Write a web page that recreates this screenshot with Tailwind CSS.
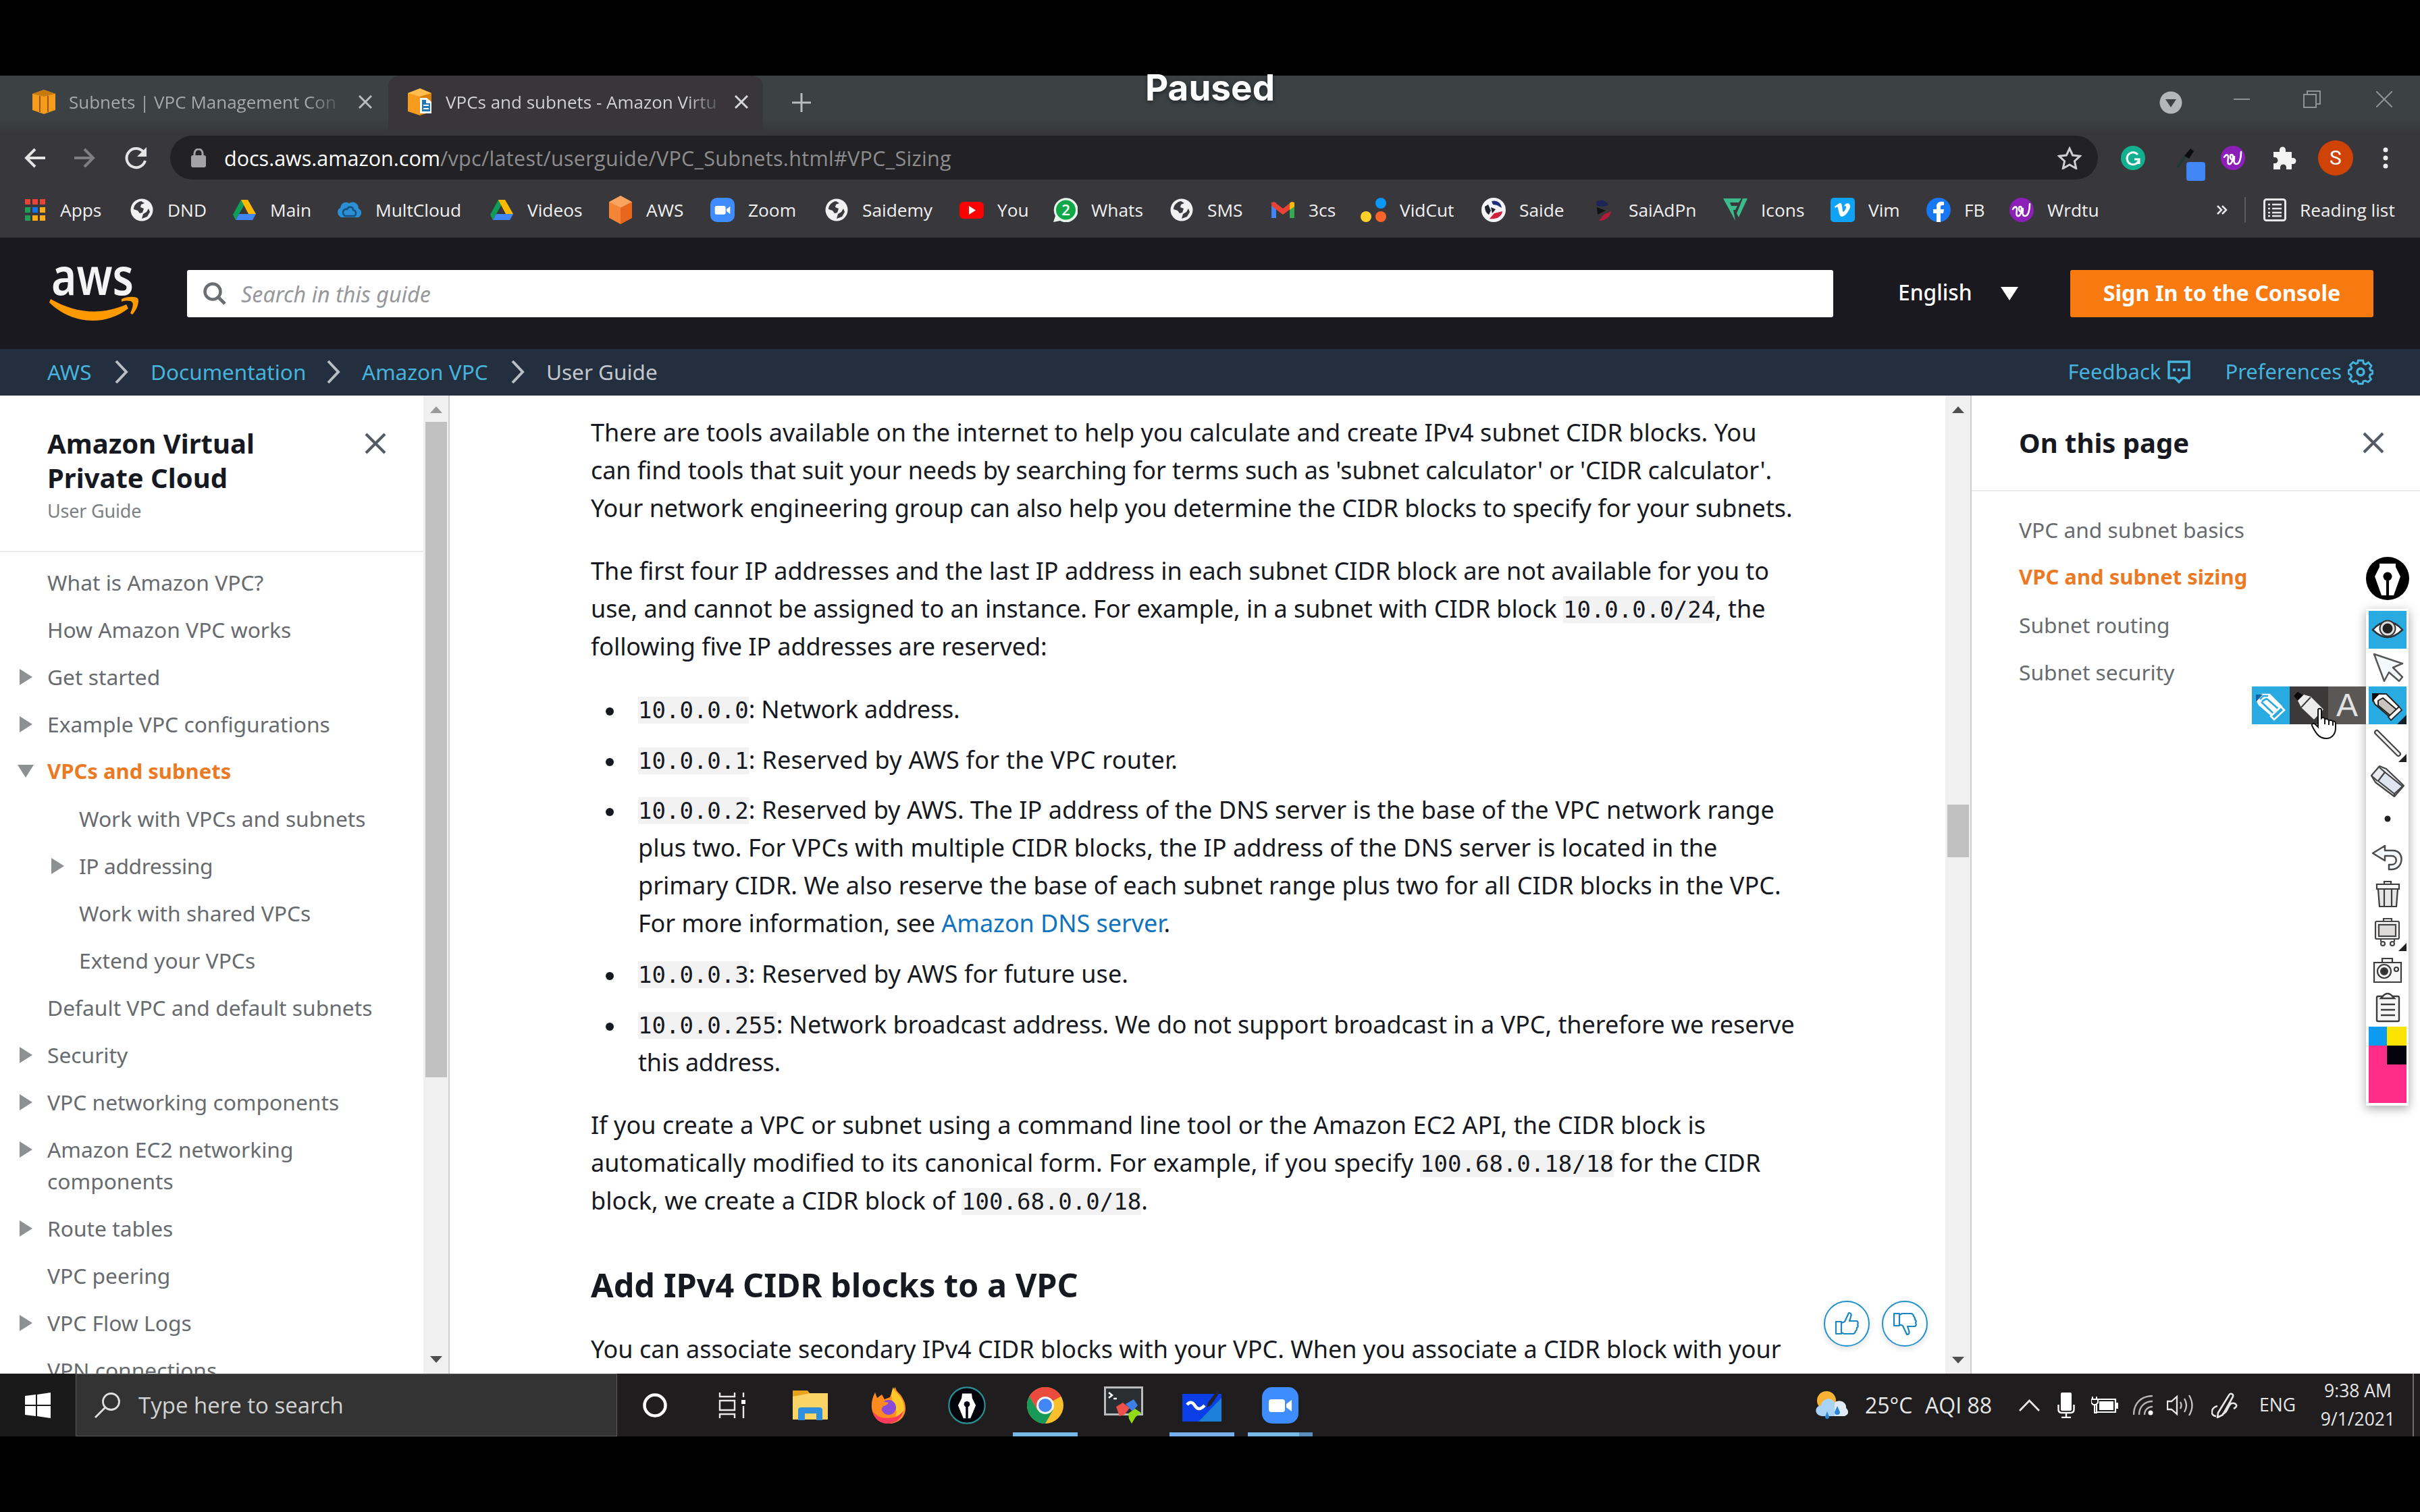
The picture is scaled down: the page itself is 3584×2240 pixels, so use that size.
<!DOCTYPE html>
<html lang="en">
<head>
<meta charset="utf-8">
<title>VPCs and subnets - Amazon Virtual Private Cloud</title>
<script src="https://cdn.jsdelivr.net/npm/@tailwindcss/browser@4"></script>
</head>
<body class="w-[3584px] h-[2240px] overflow-hidden bg-black font-['Noto_Sans',sans-serif] text-[#16191f]">

<!-- shared symbols -->
<svg class="hidden">
  <defs>
    <symbol id="globe" viewBox="0 0 36 36"><circle cx="18" cy="18" r="16.5" fill="#f1f1f1"/><path d="M17 5c-6 1-11 6-11 12l6 2 3 4 4-1 2-6-5-2 1-4 5-2zM20 24l5-3 3-5 2 5-4 7-8 3z" fill="#3a393d"/></symbol>
    <symbol id="drive" viewBox="0 0 36 36"><path d="M13 3h9L10 24l-5 9-4-8z" fill="#0f9d58"/><path d="M13 3h10l12 21H24z" fill="#ffba00"/><path d="M10 24h25l-5 9H5z" fill="#4285f4"/></symbol>
    <symbol id="wordtune" viewBox="0 0 36 36"><circle cx="18" cy="18" r="18" fill="#8b1fb8"/><path d="M5 17c2-4 6-5 6 0 0 4-2 9 1 10 4 1 6-6 6-11 0-4-4-4-4 0 0 5 3 5 6 3M20 16c-1 6-1 11 3 11 5 0 7-9 7-18" fill="none" stroke="#fff" stroke-width="2.600" stroke-linecap="round"/></symbol>
    <symbol id="zoomcam" viewBox="0 0 54 54"><rect width="54" height="54" rx="15" fill="#3f8cff"/><rect x="10" y="18" width="24" height="19" rx="4" fill="#fff"/><path d="M36 25l8-6v17l-8-6z" fill="#fff"/></symbol>
    <symbol id="tri" viewBox="0 0 20 24"><path d="M1 0L20 12 1 24z" fill="#8d9191"/></symbol>
    <symbol id="chev" viewBox="0 0 22 36"><path d="M3 2l15 16L3 34" fill="none" stroke="#b9bec4" stroke-width="4"/></symbol>
    <symbol id="close" viewBox="0 0 32 32"><path d="M2 2l28 28M30 2L2 30" stroke="#545b64" stroke-width="4.2"/></symbol>
    <symbol id="nib" viewBox="0 0 64 64"><path d="M20 10h24v5l7 14-10 28H34V34h-4v23h-7L13 29l7-14z" fill="#fff"/><circle cx="32" cy="29" r="6.5" fill="#000"/><path d="M32 30v27" stroke="#000" stroke-width="3"/></symbol>
  </defs>
</svg>

<div class="relative w-[3584px] h-[2240px] flex flex-col pt-[112px]">

<!-- browser chrome -->
<header class="h-[240px] shrink-0 bg-[#38373b] font-['Open_Sans',sans-serif] text-[26px] leading-none">
  <div class="h-[82px] bg-linear-to-b from-[#3c4144] from-75% to-[#39393d] flex">
    <div class="w-[575px] pl-[46px] flex items-center text-[#a9abad] pb-[4px]">
      <svg class="w-[38px] h-[38px]" viewBox="0 0 38 38"><path d="M2 7L19 1l17 6v24l-17 6-17-6z" fill="#f79b1e"/><path d="M2 7l17 4 17-4-17-6z" fill="#c77a10"/><path d="M13 10v24M25 10v24" stroke="#9a5b07" stroke-width="2"/></svg>
      <div class="ml-[18px] w-[403px] overflow-hidden whitespace-nowrap leading-[40px] text-transparent bg-clip-text bg-linear-to-r from-[#a9abad] from-88% to-[#4a4d50]">Subnets | VPC Management Con</div>
      <svg class="ml-[26px] w-[20px] h-[20px]" viewBox="0 0 20 20"><path d="M1 1l18 18M19 1L1 19" stroke="#b9bbbd" stroke-width="3"/></svg>
    </div>
    <div class="w-[555px] pl-[26px] flex items-center rounded-t-[16px] bg-[#38363b] pb-[4px]">
      <svg class="w-[42px] h-[42px]" viewBox="0 0 42 42"><path d="M3 8L21 1l17 7v27l-17 6-18-6z" fill="#f79b1e"/><path d="M3 8l18 5 17-5-17-7z" fill="#ffbe4d"/><path d="M21 13v28l17-6V8z" fill="#d98107"/><path d="M21 15h10l7 6v17H21z" fill="#fff"/><path d="M24 18h6v5h6v12H24z" fill="#2277b8"/><path d="M26 26h8M26 31h8" stroke="#fff" stroke-width="2"/></svg>
      <div class="ml-[17px] w-[406px] overflow-hidden whitespace-nowrap leading-[40px] text-transparent bg-clip-text bg-linear-to-r from-[#d4d5d6] from-88% to-[#4a4d50]">VPCs and subnets - Amazon Virtu</div>
      <svg class="ml-[22px] w-[20px] h-[20px]" viewBox="0 0 20 20"><path d="M1 1l18 18M19 1L1 19" stroke="#d6d7d8" stroke-width="3"/></svg>
    </div>
    <div class="flex-1 flex items-center pl-[43px] pr-[41px] pb-[2px]">
      <svg class="w-[28px] h-[28px]" viewBox="0 0 28 28"><path d="M14 0v28M0 14h28" stroke="#b9bbbd" stroke-width="3"/></svg>
      <div class="flex-1"></div>
      <svg class="w-[34px] h-[34px] mr-[76px]" viewBox="0 0 34 34"><circle cx="17" cy="17" r="16.5" fill="#b4b7ba"/><path d="M9 12h16l-8 12z" fill="#3c4144"/></svg>
      <svg class="w-[24px] h-[24px] mb-[10px] mr-[79px]" viewBox="0 0 24 24"><path d="M0 12h24" stroke="#909396" stroke-width="2"/></svg>
      <svg class="w-[26px] h-[26px] mb-[10px] mr-[82px]" viewBox="0 0 26 26"><path d="M1 6h18v19H1zM6 5V1h19v19h-5" fill="none" stroke="#909396" stroke-width="2"/></svg>
      <svg class="w-[24px] h-[24px] mb-[10px]" viewBox="0 0 24 24"><path d="M0 0l24 24M24 0L0 24" stroke="#909396" stroke-width="2"/></svg>
    </div>
  </div>

  <div class="h-[79px] flex items-center pl-[36px] pr-[45px]">
    <svg class="w-[31px] h-[30px]" viewBox="0 0 31 30"><path d="M31 15H4M16 2L3 15l13 13" fill="none" stroke="#e4e4e5" stroke-width="4"/></svg>
    <svg class="w-[31px] h-[30px] ml-[43px]" viewBox="0 0 31 30"><path d="M0 15h27M15 2l13 13-13 13" fill="none" stroke="#7f7f82" stroke-width="4"/></svg>
    <svg class="w-[36px] h-[34px] ml-[43px]" viewBox="0 0 36 34"><path d="M29 9a14 14 0 1 0 2 12" fill="none" stroke="#e4e4e5" stroke-width="4"/><path d="M33 1v14H19z" fill="#e4e4e5"/></svg>
    <div class="ml-[32px] w-[2855px] h-[65px] rounded-full bg-[#222224] flex items-center pl-[31px] pr-[24px] text-[30.5px]">
      <svg class="w-[22px] h-[28px]" viewBox="0 0 22 28"><rect y="10" width="22" height="18" rx="3" fill="#a3a3a6"/><path d="M5 12V7a6 6 0 0 1 12 0v5" fill="none" stroke="#a3a3a6" stroke-width="3"/></svg>
      <div class="ml-[27px] flex-1 whitespace-nowrap text-[#8d8d90] leading-[44px] tracking-[0.32px]"><span class="text-white tracking-normal">docs.aws.amazon.com</span>/vpc/latest/userguide/VPC_Subnets.html#VPC_Sizing</div>
      <svg class="w-[36px] h-[34px]" viewBox="0 0 36 34"><path d="M18 3l4.6 10 11 1.200-8.200 7.500 2.300 10.800L18 27l-9.700 5.500 2.300-10.800L2.400 14.200l11-1.200z" fill="none" stroke="#cfcfd1" stroke-width="3"/></svg>
    </div>
    <svg class="w-[36px] h-[38px] ml-[34px]" viewBox="0 0 36 38"><circle cx="18" cy="19" r="18" fill="#13b08f"/><path d="M25 14a9 9 0 1 0 2 7h-7M27 21v7" fill="none" stroke="#fff" stroke-width="3"/></svg>
    <svg class="w-[46px] h-[56px] ml-[44px] mt-[16px]" viewBox="0 0 46 56"><path d="M4 34l12-18" stroke="#1f3a36" stroke-width="4"/><path d="M14 17l9-11 5 4-7 11z" fill="#0c0c0e"/><rect x="17" y="26" width="28" height="28" rx="4" fill="#4285f4"/></svg>
    <svg class="w-[36px] h-[36px] ml-[22px]"><use href="#wordtune"/></svg>
    <svg class="w-[36px] h-[36px] ml-[40px]" viewBox="0 0 36 36"><path d="M2 9h9V6a4.500 4.500 0 0 1 9 0v3h9v9h2a4.500 4.500 0 0 1 0 9h-2v8h-8v-3a4.500 4.500 0 0 0-9 0v3H2v-9h2a4.500 4.500 0 0 0 0-9H2z" fill="#f3f3f4"/></svg>
    <div class="ml-[32px] w-[52px] h-[52px] rounded-full bg-[#cf4307] text-white text-[30px] font-['Roboto',sans-serif] flex items-center justify-center">S</div>
    <svg class="w-[8px] h-[32px] ml-[44px]" viewBox="0 0 8 32"><path d="M4 4h0M4 16h0M4 28h0" stroke="#eee" stroke-width="7" stroke-linecap="round"/></svg>
  </div>

  <nav class="h-[76px] flex items-center pl-[33px] text-[26.300px] text-[#f1f1f1] whitespace-nowrap">
    <div class="w-[159px] shrink-0 flex items-center gap-[20px]"><svg class="w-[36px] h-[36px]" viewBox="0 0 36 36"><path d="M4 2h8v8H4zM15 2h8v8h-8zM26 2h8v8h-8z" fill="#ea4335"/><path d="M4 14h8v8H4zM4 26h8v8H4z" fill="#1e9e57"/><path d="M15 14h8v8h-8z" fill="#1a73e8"/><path d="M26 14h8v8h-8zM15 26h8v8h-8zM26 26h8v8h-8z" fill="#fbab14"/></svg>Apps</div>
    <div class="w-[152px] shrink-0 flex items-center gap-[20px]"><svg class="w-[36px] h-[36px]"><use href="#globe"/></svg>DND</div>
    <div class="w-[156px] shrink-0 flex items-center gap-[20px]"><svg class="w-[36px] h-[36px]"><use href="#drive"/></svg>Main</div>
    <div class="w-[225px] shrink-0 flex items-center gap-[20px]"><svg class="w-[36px] h-[36px]" viewBox="0 0 36 36"><path d="M5 29C-2 25-1 17 4 15 5 7 12 5 17 8c7-4 14 0 14 8 6 3 5 10 0 13z" fill="#2b8fd3"/><path d="M11 27c-6-5-2-11 3-10 2-5 9-4 9 1 5 1 5 7 2 9z" fill="none" stroke="#174f80" stroke-width="2.5"/></svg>MultCloud</div>
    <div class="w-[176px] shrink-0 flex items-center gap-[20px]"><svg class="w-[36px] h-[36px]"><use href="#drive"/></svg>Videos</div>
    <div class="w-[151px] shrink-0 flex items-center gap-[20px]"><svg class="w-[36px] h-[42px]" viewBox="0 0 36 36" preserveAspectRatio="none"><path d="M18 0l17 8v20l-17 8-17-8V8z" fill="#f58536"/><path d="M18 15l17-7v20l-17 8z" fill="#e8661b"/><path d="M18 0l17 8-17 7-17-7z" fill="#f9a461"/></svg>AWS</div>
    <div class="w-[169px] shrink-0 flex items-center gap-[20px]"><svg class="w-[36px] h-[36px]"><use href="#zoomcam"/></svg>Zoom</div>
    <div class="w-[200px] shrink-0 flex items-center gap-[20px]"><svg class="w-[36px] h-[36px]"><use href="#globe"/></svg>Saidemy</div>
    <div class="w-[139px] shrink-0 flex items-center gap-[20px]"><svg class="w-[36px] h-[36px]" viewBox="0 0 36 36"><rect y="6" width="36" height="25" rx="6" fill="#f00"/><path d="M14 12l10 6.500-10 6.500z" fill="#fff"/></svg>You</div>
    <div class="w-[172px] shrink-0 flex items-center gap-[20px]"><svg class="w-[36px] h-[36px]" viewBox="0 0 36 36"><path d="M0 36l3-9A18 18 0 1 1 10 34z" fill="#e8f5ea"/><circle cx="18.500" cy="18" r="14.500" fill="#12a84a"/><text x="18.500" y="26" text-anchor="middle" font-size="22" font-weight="600" fill="#fff">2</text></svg>Whats</div>
    <div class="w-[150px] shrink-0 flex items-center gap-[20px]"><svg class="w-[36px] h-[36px]"><use href="#globe"/></svg>SMS</div>
    <div class="w-[135px] shrink-0 flex items-center gap-[20px]"><svg class="w-[36px] h-[36px]" viewBox="0 0 36 36"><path d="M1 7h7v23H1z" fill="#4285f4"/><path d="M28 7h7v23h-7z" fill="#34a853"/><path d="M1 7l4-1 13 10L31 6l4 1v5L18 25 1 12z" fill="#ea4335"/><path d="M28 8l3-2 4 1v6l-7 5z" fill="#fbbc04"/></svg>3cs</div>
    <div class="w-[177px] shrink-0 flex items-center gap-[20px]"><svg class="w-[38px] h-[36px] -ml-[2px]" viewBox="0 0 38 36"><circle cx="30" cy="8" r="8" fill="#0a97f7"/><circle cx="8" cy="28" r="8" fill="#fdd12c"/><circle cx="30" cy="28" r="8" fill="#f9642a"/></svg>VidCut</div>
    <div class="w-[162px] shrink-0 flex items-center gap-[20px]"><svg class="w-[36px] h-[36px]" viewBox="0 0 36 36"><circle cx="18" cy="18" r="18" fill="#f4f4f6"/><path d="M15 5c6-2 14 1 15 10l-7-4-6-1z" fill="#1d2f7c"/><path d="M5 13l5-3 4 9-3 6c-4-2-6-7-6-12zM14 14l7 3-5 6z" fill="#20222c"/><path d="M12 31l7-8 12-3c0 6-8 13-19 11z" fill="#d21f3c"/></svg>Saide</div>
    <div class="w-[196px] shrink-0 flex items-center gap-[20px]"><svg class="w-[36px] h-[36px]" viewBox="0 0 36 36"><path d="M8 6c6-4 15-3 18 5l-8 2-9-1z" fill="#1d2456"/><path d="M9 14l13 5-12 6z" fill="#111"/><path d="M12 34l7-9 11-5c0 6-8 15-18 14z" fill="#b51c38"/></svg>SaiAdPn</div>
    <div class="w-[159px] shrink-0 flex items-center gap-[20px]"><svg class="w-[36px] h-[36px]" viewBox="0 0 36 36"><path d="M0 1h27l-4 6H10l2 5h9l-3 6h-3l3 16z" fill="#3cbb8c"/><path d="M29 1h7L23 29l-3-6z" fill="#3cbb8c"/></svg>Icons</div>
    <div class="w-[142px] shrink-0 flex items-center gap-[20px]"><svg class="w-[36px] h-[36px]" viewBox="0 0 36 36"><rect width="36" height="36" rx="5" fill="#10a3f5"/><path d="M6 13l7-5c4-1 4 4 5 12 1 3 5-3 5-6s-2-2-3-1c1-6 10-7 9 1-1 5-8 14-12 14s-5-8-6-13c-1-3-2-1-4 0z" fill="#fff"/></svg>Vim</div>
    <div class="w-[123px] shrink-0 flex items-center gap-[20px]"><svg class="w-[36px] h-[36px]" viewBox="0 0 36 36"><circle cx="18" cy="18" r="18" fill="#1877f2"/><path d="M15 36V23h-5v-6h5v-4c0-6 4-8 11-7v5c-4 0-5 0-5 3v3h5l-1 6h-4v13z" fill="#fff"/></svg>FB</div>
    <div class="w-[307px] shrink-0 flex items-center gap-[20px]"><svg class="w-[36px] h-[36px]"><use href="#wordtune"/></svg>Wrdtu</div>
    <svg class="w-[16px] h-[14px]" viewBox="0 0 16 14"><path d="M1 1l6 6-6 6M8 1l6 6-6 6" fill="none" stroke="#e8e8e8" stroke-width="2.600"/></svg>
    <div class="ml-[25px] w-[2px] h-[38px] bg-[#5c5b60]"></div>
    <svg class="ml-[26px] w-[34px] h-[34px]" viewBox="0 0 34 34"><rect x="1.500" y="1.500" width="31" height="31" rx="3" fill="none" stroke="#e8e8e8" stroke-width="3"/><path d="M7 9h3M7 15h3M7 21h3M7 26h3M13 9h14M13 15h14M13 21h14M13 26h14" stroke="#e8e8e8" stroke-width="2.600"/></svg>
    <div class="ml-[20px]">Reading list</div>
  </nav>
</header>

<!-- AWS header -->
<div class="h-[165px] shrink-0 bg-[#19191f] flex items-center pl-[72px]">
  <svg class="w-[136px] h-[88px]" viewBox="0 0 136 88"><text x="4" y="46" font-family="Noto Sans" font-weight="600" font-size="76" textLength="122" lengthAdjust="spacingAndGlyphs" fill="#f4f4f6">aws</text><path d="M3 52c38 22 76 24 112 8l3 6C82 94 32 88 1 57z" fill="#f90"/><path d="M108 52c9-4 20-4 24-1 3 4-1 17-8 24l-3-2c3-7 5-13 3-16s-10-3-16-1z" fill="#f90"/></svg>
  <div class="ml-[69px] w-[2438px] h-[70px] bg-white rounded-[3px] flex items-center pl-[24px]">
    <svg class="w-[34px] h-[34px]" viewBox="0 0 34 34"><circle cx="14" cy="14" r="11.500" fill="none" stroke="#6b6e72" stroke-width="4.500"/><path d="M22 22l10 10" stroke="#6b6e72" stroke-width="5"/></svg>
    <span class="ml-[22px] text-[32.300px] italic text-[#96989b] leading-[44px]">Search in this guide</span>
  </div>
  <span class="ml-[96px] w-[152px] text-[31.700px] font-medium text-white mb-[3px]">English</span>
  <svg class="w-[26px] h-[20px]" viewBox="0 0 26 20"><path d="M0 0h26L13 20z" fill="#fff"/></svg>
  <div class="ml-[77px] w-[449px] h-[70px] pb-[3px] rounded-[3px] bg-[#f97a10] text-white text-[32.300px] font-bold flex items-center justify-center whitespace-nowrap">Sign In to the Console</div>
</div>

<!-- breadcrumb -->
<div class="h-[69px] shrink-0 bg-[#232f3e] flex items-center pb-[2px] pl-[70px] pr-[69px] text-[31.500px] text-[#46b3dc] whitespace-nowrap">
  <span class="w-[99px]">AWS</span><svg class="w-[22px] h-[36px]"><use href="#chev"/></svg>
  <span class="ml-[32px] w-[260px]">Documentation</span><svg class="w-[22px] h-[36px]"><use href="#chev"/></svg>
  <span class="ml-[31px] w-[220px]">Amazon VPC</span><svg class="w-[22px] h-[36px]"><use href="#chev"/></svg>
  <span class="ml-[31px] text-[#c3c7cc]">User Guide</span>
  <span class="flex-1"></span>
  <span class="text-[31px]">Feedback</span>
  <svg class="ml-[10px] mr-[51px] w-[34px] h-[34px]" viewBox="0 0 34 34"><path d="M2 2h30v24h-9l-6 6-6-6H2z" fill="none" stroke="#46b3dc" stroke-width="3.500"/><path d="M8 14h4M15 14h4M22 14h4" stroke="#46b3dc" stroke-width="4"/></svg>
  <span class="text-[31px]">Preferences</span>
  <svg class="ml-[9px] w-[38px] h-[38px]" viewBox="0 0 38 38"><path d="M15.500 2h7l1 4.500 3 1.300L30.500 5 35 10l-2.500 4 1.200 2.500 3.300 1v4l-3.800 1.500-1 3L34.500 30 30 34l-4-2-3 1-1 3.500h-6l-1.500-3.500-3-1L7.500 34 3 29.500 5.500 26l-1-3L1 21.500v-5l3.800-1.500 1-2.500L3.500 9 8 4.500l4 2.300 2.500-1z" fill="none" stroke="#46b3dc" stroke-width="3"/><circle cx="19" cy="19" r="5" fill="none" stroke="#46b3dc" stroke-width="3.500"/></svg>
</div>

<!-- content -->
<div class="h-[1449px] shrink-0 bg-white flex overflow-hidden">
  <!-- left nav -->
  <aside class="w-[627px] shrink-0 text-[#676b6f] text-[31.750px] leading-[47px] whitespace-nowrap">
    <div class="h-[232px] border-b-2 border-[#e9ebed] pl-[70px] pt-[45px] flex">
      <div class="w-[470px]">
        <div class="text-[40px] leading-[51px] font-bold text-[#16191f]">Amazon Virtual<br>Private Cloud</div>
        <div class="text-[27px] tracking-[-0.200px] leading-[48px] text-[#7c7f83]">User Guide</div>
      </div>
      <svg class="mt-[10px] w-[32px] h-[32px]"><use href="#close"/></svg>
    </div>
    <div class="pt-[21px] flex flex-col gap-[23px]">
      <div class="pl-[70px]">What is Amazon VPC?</div>
      <div class="pl-[70px]">How Amazon VPC works</div>
      <div class="flex items-center pl-[28px]"><svg class="w-[20px] h-[24px] mr-[22px]"><use href="#tri"/></svg>Get started</div>
      <div class="flex items-center pl-[28px]"><svg class="w-[20px] h-[24px] mr-[22px]"><use href="#tri"/></svg>Example VPC configurations</div>
      <div class="flex items-center pl-[26px] text-[#ec7a24] text-[31px] font-bold"><svg class="w-[24px] h-[19px] mr-[20px]" viewBox="0 0 24 19"><path d="M0 0h24L12 19z" fill="#8d9191"/></svg>VPCs and subnets</div>
      <div class="pl-[117px]">Work with VPCs and subnets</div>
      <div class="flex items-center pl-[75px]"><svg class="w-[20px] h-[24px] mr-[22px]"><use href="#tri"/></svg><span class="tracking-[-0.400px]">IP addressing</span></div>
      <div class="pl-[117px]">Work with shared VPCs</div>
      <div class="pl-[117px]">Extend your VPCs</div>
      <div class="pl-[70px]">Default VPC and default subnets</div>
      <div class="flex items-center pl-[28px]"><svg class="w-[20px] h-[24px] mr-[22px]"><use href="#tri"/></svg>Security</div>
      <div class="flex items-center pl-[28px]"><svg class="w-[20px] h-[24px] mr-[22px]"><use href="#tri"/></svg>VPC networking components</div>
      <div class="flex items-start pl-[28px]"><svg class="w-[20px] h-[24px] mr-[22px] mt-[12px]"><use href="#tri"/></svg><span>Amazon EC2 networking<br>components</span></div>
      <div class="flex items-center pl-[28px]"><svg class="w-[20px] h-[24px] mr-[22px]"><use href="#tri"/></svg>Route tables</div>
      <div class="pl-[70px]">VPC peering</div>
      <div class="flex items-center pl-[28px]"><svg class="w-[20px] h-[24px] mr-[22px]"><use href="#tri"/></svg>VPC Flow Logs</div>
      <div class="pl-[70px]">VPN connections</div>
    </div>
  </aside>
  <div class="w-[39px] shrink-0 bg-[#f0f0f1] border-r-2 border-[#cfcfd0] flex flex-col items-center pt-[16px]">
    <svg class="w-[18px] h-[10px]" viewBox="0 0 18 10"><path d="M0 10L9 0l9 10z" fill="#9a9a9a"/></svg>
    <div class="mt-[13px] w-[32px] h-[971px] bg-[#c1c1c1]"></div>
    <svg class="mt-[413px] w-[18px] h-[10px]" viewBox="0 0 18 10"><path d="M0 0h18L9 10z" fill="#4f4f4f"/></svg>
  </div>

  <!-- article -->
  <main class="relative w-[2215px] shrink-0 pl-[209px] pt-[27px] text-[36px] leading-[56px] whitespace-nowrap">
    <p><span class="tracking-[0.055px]">There are tools available on the internet to help you calculate and create IPv4 subnet CIDR blocks. You</span><br><span class="tracking-[-0.095px]">can find tools that suit your needs by searching for terms such as 'subnet calculator' or 'CIDR calculator'.</span><br><span class="tracking-[-0.040px]">Your network engineering group can also help you determine the CIDR blocks to specify for your subnets.</span></p>
    <p class="mt-[37px]"><span class="tracking-[-0.040px]">The first four IP addresses and the last IP address in each subnet CIDR block are not available for you to</span><br><span class="tracking-[-0.080px]">use, and cannot be assigned to an instance. For example, in a subnet with CIDR block </span><code class="font-['DejaVu_Sans_Mono',monospace] text-[34px] leading-none bg-[#f2f2f3]">10.0.0.0/24</code>, the<br><span class="tracking-[-0.100px]">following five IP addresses are reserved:</span></p>
    <ul class="mt-[37px] flex flex-col gap-[18.700px]">
      <li class="flex pl-[22px]"><span class="mt-[25px] mr-[36px] w-[12px] h-[12px] rounded-full bg-[#16191f]"></span><span><code class="font-['DejaVu_Sans_Mono',monospace] text-[34px] leading-none bg-[#f2f2f3]">10.0.0.0</code><span class="tracking-[-0.200px]">: Network address.</span></span></li>
      <li class="flex pl-[22px]"><span class="mt-[25px] mr-[36px] w-[12px] h-[12px] rounded-full bg-[#16191f]"></span><span><code class="font-['DejaVu_Sans_Mono',monospace] text-[34px] leading-none bg-[#f2f2f3]">10.0.0.1</code><span class="tracking-[0.240px]">: Reserved by AWS for the VPC router.</span></span></li>
      <li class="flex pl-[22px]"><span class="mt-[25px] mr-[36px] w-[12px] h-[12px] rounded-full bg-[#16191f]"></span><span><code class="font-['DejaVu_Sans_Mono',monospace] text-[34px] leading-none bg-[#f2f2f3]">10.0.0.2</code><span class="tracking-[0.060px]">: Reserved by AWS. The IP address of the DNS server is the base of the VPC network range<br>plus two. For VPCs with multiple CIDR blocks, the IP address of the DNS server is located in the</span><br>primary CIDR. We also reserve the base of each subnet range plus two for all CIDR blocks in the VPC.<br><span class="tracking-[-0.060px]">For more information, see <a class="text-[#0f73bd]">Amazon DNS server</a>.</span></span></li>
      <li class="flex pl-[22px]"><span class="mt-[25px] mr-[36px] w-[12px] h-[12px] rounded-full bg-[#16191f]"></span><span><code class="font-['DejaVu_Sans_Mono',monospace] text-[34px] leading-none bg-[#f2f2f3]">10.0.0.3</code><span class="tracking-[0.100px]">: Reserved by AWS for future use.</span></span></li>
      <li class="flex pl-[22px]"><span class="mt-[25px] mr-[36px] w-[12px] h-[12px] rounded-full bg-[#16191f]"></span><span><code class="font-['DejaVu_Sans_Mono',monospace] text-[34px] leading-none bg-[#f2f2f3]">10.0.0.255</code><span class="tracking-[-0.050px]">: Network broadcast address. We do not support broadcast in a VPC, therefore we reserve</span><br><span class="tracking-[-0.250px]">this address.</span></span></li>
    </ul>
    <p class="mt-[37px]"><span class="tracking-[0.050px]">If you create a VPC or subnet using a command line tool or the Amazon EC2 API, the CIDR block is</span><br><span class="tracking-[0.130px]">automatically modified to its canonical form. For example, if you specify </span><code class="font-['DejaVu_Sans_Mono',monospace] text-[34px] leading-none bg-[#f2f2f3]">100.68.0.18/18</code><span class="tracking-[0.120px]"> for the CIDR</span><br><span class="tracking-[0.080px]">block, we create a CIDR block of </span><code class="font-['DejaVu_Sans_Mono',monospace] text-[34px] leading-none bg-[#f2f2f3]">100.68.0.0/18</code>.</p>
    <h2 class="mt-[66px] text-[48.600px] leading-[60px] font-bold">Add IPv4 CIDR blocks to a VPC</h2>
    <p class="mt-[38px]">You can associate secondary IPv4 CIDR blocks with your VPC. When you associate a CIDR block with your</p>

    <div class="absolute left-[2035px] top-[1341px] flex gap-[18px]">
      <div class="w-[68px] h-[68px] rounded-full border-2 border-[#2292cc] bg-white shadow-[0_3px_10px_rgba(0,0,0,0.12)] flex items-center justify-center"><svg class="w-[36px] h-[36px]" viewBox="0 0 36 36"><path d="M2 15h8v18H2zM10 17l5-2 6-13c4 0 4 3 3 6l-2 6h11c2 1 2 4 1 5 1 2 1 4-1 5 0 2 0 4-2 5 0 2-1 3-3 4H14l-4-2" fill="none" stroke="#1a86c2" stroke-width="2.200" stroke-linejoin="round"/></svg></div>
      <div class="w-[68px] h-[68px] rounded-full border-2 border-[#2292cc] bg-white shadow-[0_3px_10px_rgba(0,0,0,0.12)] flex items-center justify-center"><svg class="w-[36px] h-[36px]" viewBox="0 0 36 36"><path d="M2 3h8v18H2zM10 19l5 2 6 13c4 0 4-3 3-6l-2-6h11c2-1 2-4 1-5 1-2 1-4-1-5 0-2 0-4-2-5 0-2-1-3-3-4H14l-4 2" fill="none" stroke="#1a86c2" stroke-width="2.200" stroke-linejoin="round"/></svg></div>
    </div>
  </main>
  <div class="w-[39px] shrink-0 bg-[#f0f0f1] border-r-2 border-[#cfcfd0] flex flex-col items-center pt-[16px]">
    <svg class="w-[18px] h-[10px]" viewBox="0 0 18 10"><path d="M0 10L9 0l9 10z" fill="#4f4f4f"/></svg>
    <div class="mt-[580px] w-[32px] h-[78px] bg-[#c1c1c1]"></div>
    <svg class="mt-[740px] w-[18px] h-[10px]" viewBox="0 0 18 10"><path d="M0 0h18L9 10z" fill="#4f4f4f"/></svg>
  </div>

  <!-- on this page -->
  <aside class="flex-1 text-[31.700px] leading-[47px] text-[#676b6f] whitespace-nowrap">
    <div class="h-[142px] border-b-2 border-[#e9ebed] flex items-center pl-[70px] pr-[53px]">
      <span class="flex-1 text-[40px] font-bold text-[#16191f] pb-[2px]">On this page</span>
      <svg class="w-[32px] h-[32px]"><use href="#close"/></svg>
    </div>
    <div class="pt-[33px] pl-[70px] flex flex-col gap-[23.300px]">
      <div>VPC and subnet basics</div>
      <div class="text-[#ec7a24] text-[31px] font-bold">VPC and subnet sizing</div>
      <div>Subnet routing</div>
      <div>Subnet security</div>
    </div>
  </aside>
</div>

<!-- taskbar -->
<footer class="h-[93px] shrink-0 bg-[#1f1d1e] flex items-center font-['Open_Sans',sans-serif] text-[#e6e6e6] leading-none whitespace-nowrap">
  <div class="w-[112px] h-full bg-[#1a1a1a] flex items-center justify-center">
    <svg class="w-[38px] h-[38px]" viewBox="0 0 38 38"><path d="M0 5l16-2v15H0zM18 3l20-3v18H18zM0 20h16v15L0 33zM18 20h20v18l-20-3z" fill="#fff"/></svg>
  </div>
  <div class="w-[802px] h-full bg-[#333333] border border-[#5b5b5b] flex items-center pl-[27px] text-[33px] text-[#d2d2d2]">
    <svg class="w-[38px] h-[38px]" viewBox="0 0 38 38"><circle cx="24.500" cy="13.500" r="12" fill="none" stroke="#e0e0e0" stroke-width="2.800"/><path d="M16 22L1 37" stroke="#e0e0e0" stroke-width="2.800"/></svg>
    <span class="ml-[27px]">Type here to search</span>
  </div>
  <div class="h-full flex items-center">
    <div class="w-[112px] flex justify-center"><svg class="w-[38px] h-[38px]" viewBox="0 0 38 38"><circle cx="19" cy="19" r="15.500" fill="none" stroke="#fff" stroke-width="4.500"/></svg></div>
    <div class="w-[116px] flex justify-center"><svg class="w-[40px] h-[38px]" viewBox="0 0 40 38"><path d="M2 0v6h22V0M2 12h22v14H2zM2 38v-6h22v6M37 0v7M37 20v18" fill="none" stroke="#e8e8e8" stroke-width="2.400"/><path d="M34 11h6v6h-6z" fill="#fff"/></svg></div>
    <div class="w-[116px] flex justify-center"><svg class="w-[54px] h-[50px]" viewBox="0 0 54 50"><path d="M1 3h22l4 5v8H1z" fill="#e9a21c"/><path d="M1 12l26-5h26v39H1z" fill="#fbd467"/><path d="M9 47V32c0-3 2-4 4-4h28c2 0 4 1 4 4v15h-9V37H19v10z" fill="#2f8fdc"/></svg></div>
    <div class="w-[116px] flex justify-center"><svg class="w-[54px] h-[56px]" viewBox="0 0 54 56"><path d="M7 9l3 8 7-5 4 7 8-3c2-6 4-11 8-15 1 7 7 9 10 15 11 17 4 39-20 39C5 55-5 31 7 9z" fill="#ff8a1f"/><path d="M34 1c1 7 9 10 12 17 9 15 2 37-19 37 14-6 14-22 6-32-3-8-2-16 1-22z" fill="#ffc72b"/><path d="M3 36c5 8 13 11 23 11s18-4 23-11c-3 13-12 19-23 19S6 49 3 36z" fill="#ff3b5c"/><circle cx="27" cy="31" r="11" fill="#8a4bd8"/><path d="M14 26c5-5 8-3 13-2-2 4-5 4-7 5s-4 4-3 7c-4-2-4-6-3-10z" fill="#ff8a1f"/></svg></div>
    <div class="w-[116px] flex justify-center"><svg class="w-[56px] h-[56px]" viewBox="0 0 64 64"><circle cx="32" cy="32" r="30.500" fill="#02040c" stroke="#2a8f92" stroke-width="2.500"/><path d="M24 12h16l1 8 6 12-9 22h-4V34h-4v20h-4l-9-22 6-12z" fill="#fff"/><circle cx="32" cy="30" r="5" fill="#02040c"/></svg></div>
    <div class="relative w-[116px] h-full flex justify-center items-center"><svg class="w-[54px] h-[54px]" viewBox="0 0 54 54"><circle cx="27" cy="27" r="27" fill="#f9bf2d"/><path d="M27 27L3.600 13.500A27 27 0 0 1 50.400 13.500z" fill="#ea4b3c"/><path d="M27 13.500h23.400A27 27 0 0 0 3.600 13.500L15.300 33.700z" fill="#ea4b3c"/><path d="M3.600 13.500A27 27 0 0 0 27 54l11.700-20.300H15.300z" fill="#179a58"/><circle cx="27" cy="27" r="13" fill="#f4f4f4"/><circle cx="27" cy="27" r="10" fill="#4285f4"/></svg><span class="absolute bottom-0 left-[10px] w-[96px] h-[6px] bg-[#76b9e8]"></span></div>
    <div class="w-[116px] flex justify-center"><svg class="w-[58px] h-[56px]" viewBox="0 0 58 56"><rect x="1.500" y="1.500" width="55" height="40" fill="#2a2e30" stroke="#b9bbbc" stroke-width="3"/><path d="M7 9l5 4-5 4M14 18h5" fill="none" stroke="#fff" stroke-width="2.500"/><path d="M18 30l10-6 10 8-8 10-7 2z" fill="#f0504a"/><path d="M32 26l12-7 6 9-8 9z" fill="#3d7fe6"/><path d="M36 40l10-7 9 6-8 6-6 10-4-7z" fill="#8edb16"/></svg></div>
    <div class="relative w-[116px] h-full flex justify-center items-center"><svg class="w-[58px] h-[50px]" viewBox="0 0 58 50"><path d="M0 8h58v41H0z" fill="#0c3ee8"/><path d="M58 14v35H24z" fill="#1c7fd8"/><path d="M7 24c5-6 9-3 12 2s8 6 14-1" fill="none" stroke="#fff" stroke-width="4.500"/><path d="M36 29l2-8L52 2l4 3-13 19z" fill="#20242c"/></svg><span class="absolute bottom-0 left-[10px] w-[96px] h-[6px] bg-[#76b0ec]"></span></div>
    <div class="relative w-[116px] h-full flex justify-center items-center"><svg class="w-[54px] h-[54px]"><use href="#zoomcam"/></svg><span class="absolute bottom-0 left-[10px] w-[76px] h-[6px] bg-[#76b9e8]"></span><span class="absolute bottom-0 left-[86px] w-[20px] h-[6px] bg-[#5b8fc0]"></span></div>
  </div>
  <div class="flex-1"></div>
  <svg class="w-[50px] h-[42px]" viewBox="0 0 50 42"><circle cx="17" cy="14" r="14" fill="#f9b233"/><path d="M11 37C-2 36-1 22 9 21c1-10 15-14 20-4 8-6 18 0 17 8 6 6 2 12-5 12z" fill="#a9d4f5"/><path d="M29 17c8-6 18 0 17 8 6 6 2 12-5 12H29z" fill="#dfeaf5"/><path d="M18 30l3 8a3 3 0 0 1-6 0zM33 22l4 9a4 4 0 0 1-8 0z" fill="#2c86d8"/></svg>
  <span class="ml-[24px] w-[89px] text-[32px]">25°C</span>
  <span class="w-[139px] text-[32px]">AQI 88</span>
  <svg class="w-[31px] h-[18px]" viewBox="0 0 31 18"><path d="M1 17L15.500 2 30 17" fill="none" stroke="#e6e6e6" stroke-width="2.800"/></svg>
  <svg class="ml-[26px] w-[26px] h-[38px]" viewBox="0 0 26 38"><rect x="5" width="16" height="27" rx="2" fill="#fff"/><path d="M1.500 18v7c0 4 2 5 5 5h13c3 0 5-1 5-5v-7M13 30v6M6 37h14" fill="none" stroke="#fff" stroke-width="2.400"/></svg>
  <svg class="ml-[24px] w-[40px] h-[28px]" viewBox="0 0 40 28"><path d="M10 5h26v19H8V13" fill="none" stroke="#fff" stroke-width="2.200"/><path d="M12 8h21v13H12zM37 10h3v9h-3z" fill="#fff"/><path d="M2 1v4M8 1v4M0 5h10v5l-3 3H3l-3-3zM5 12v13h4" stroke="#fff" fill="none" stroke-width="2"/></svg>
  <svg class="ml-[22px] w-[30px] h-[30px]" viewBox="0 0 30 30"><path d="M1 29C1 12 12 1 29 1M9 29C9 17 17 9 29 9M17 29c0-7 5-12 12-12" fill="none" stroke="#b5b5b5" stroke-width="2.400"/><circle cx="26" cy="26" r="3.500" fill="#fff"/></svg>
  <svg class="ml-[20px] w-[40px] h-[34px]" viewBox="0 0 40 34"><path d="M1 11h6l8-7v26l-8-7H1z" fill="none" stroke="#e6e6e6" stroke-width="2.300"/><path d="M20 12q3 5 0 10M26 7q6 10 0 20M33 2q9 15 0 30" fill="none" stroke="#c8c8c8" stroke-width="2.300"/></svg>
  <svg class="ml-[26px] w-[40px] h-[38px]" viewBox="0 0 40 38"><path d="M10 30L26 4c2-4 7-2 6 2L17 33l-8 4zM9 20c-10 2-11 15-2 15M16 32c9-2 8-14 14-16 6-1 11 4 3 8" fill="none" stroke="#e6e6e6" stroke-width="2.600"/></svg>
  <span class="ml-[31px] w-[77px] text-[26.500px]">ENG</span>
  <div class="w-[138px] text-[26.500px] text-center leading-[42px] pb-[2px]">9:38 AM<br>9/1/2021</div>
  <div class="ml-[12px] mr-[9px] w-[2px] h-full bg-[#6d6d6d]"></div>
</footer>

<!-- status overlay -->
<div class="absolute top-[96px] left-0 w-full text-center text-white text-[53px] leading-[68px] font-bold font-['Inter',sans-serif] [text-shadow:0_2px_6px_rgba(0,0,0,0.5)]">Paused</div>

<!-- drawing toolbar -->
<div class="absolute left-[3504px] top-[825px] w-[63px] flex flex-col items-center">
  <div class="w-[64px] h-[64px] rounded-full bg-black"><svg class="w-[64px] h-[64px]"><use href="#nib"/></svg></div>
  <div class="mt-[13px] w-[63px] pt-[3px] pb-[4px] bg-white shadow-[0_4px_14px_rgba(0,0,0,0.35)] flex flex-col items-center">
    <div class="w-[56px] h-[56px] bg-[#29abe2]"><svg class="w-[56px] h-[56px]" viewBox="0 0 56 56"><path d="M6 28Q28 4 50 28 28 50 6 28z" fill="#fff" stroke="#2b3338" stroke-width="2.500"/><circle cx="28" cy="26" r="11.500" fill="#ddd" stroke="#333" stroke-width="2"/><circle cx="28" cy="26" r="7.500" fill="#222"/></svg></div>
    <svg class="w-[56px] h-[56px]" viewBox="0 0 56 56"><path d="M8 8l42 14-14 6 14 14-5 6-15-13-7 13z" fill="#f4fafc" stroke="#555" stroke-width="2.500" stroke-linejoin="round"/></svg>
    <div class="w-[56px] h-[56px] bg-[#29abe2]"><svg class="w-[56px] h-[56px]" viewBox="0 0 56 56"><path d="M56 42v14H42z" fill="#12202a"/><path d="M6 19l8-8h12l19 19-14 15L9 26z" fill="#fff" stroke="#222" stroke-width="2" stroke-linejoin="round"/><path d="M5 10h12L5 23z" fill="#0a0a0a"/><path d="M14 21l7-4 20 17-9 9-18-15z" fill="#c9c4c0" stroke="#222" stroke-width="2" stroke-linejoin="round"/><path d="M45 30l4 5-16 15-4-5z" fill="#fff" stroke="#222" stroke-width="1.800"/></svg></div>
    <svg class="w-[56px] h-[56px]" viewBox="0 0 56 56"><path d="M12 12l32 32" stroke="#444" stroke-width="8" stroke-linecap="round"/><path d="M12 12l32 32" stroke="#f1f1f1" stroke-width="3.600" stroke-linecap="round"/><path d="M56 44v12H44z" fill="#222"/></svg>
    <svg class="w-[56px] h-[56px]" viewBox="0 0 56 56"><g fill="#e9ebf0" stroke="#444" stroke-width="2.200" stroke-linejoin="round"><path d="M4 20L16 6l10 4 26 25-14 16L10 30z"/><path d="M14 28l10-13 26 21-12 11z" fill="#dfe6f2"/><path d="M4 20l9 8M24 15l-8-7M38 47v4"/></g></svg>
    <svg class="w-[56px] h-[56px]" viewBox="0 0 56 56"><circle cx="28" cy="28" r="4.500" fill="#222"/></svg>
    <svg class="w-[56px] h-[56px]" viewBox="0 0 56 56"><path d="M6 23L24 12v7h12c18 0 16 28-2 28h-4v-7h4c9 0 9-13 0-13H24v7z" fill="#f6f9fb" stroke="#4a4a4a" stroke-width="2.500" stroke-linejoin="round"/></svg>
    <svg class="w-[56px] h-[56px]" viewBox="0 0 56 56"><g fill="#e6e6e6" stroke="#3c3c3c" stroke-width="2.200"><path d="M23 14V9h10v5" fill="none"/><path d="M14 20h29l-2 26H16z"/><path d="M12 13h33v7H12z" fill="#f6f6f6"/><path d="M23 21v25M34 21v25"/></g></svg>
    <svg class="w-[56px] h-[56px]" viewBox="0 0 56 56"><g fill="#f4f4f4" stroke="#444" stroke-width="2.200"><path d="M22 12V8h12v4" fill="none"/><rect x="10" y="12" width="35" height="26" rx="2"/><rect x="15" y="17" width="25" height="17" fill="#dedbdb"/><circle cx="21" cy="45" r="3"/><circle cx="35" cy="45" r="3"/><path d="M18 39v3M38 39v3"/></g><path d="M56 44v12H44z" fill="#222"/></svg>
    <svg class="w-[56px] h-[56px]" viewBox="0 0 56 56"><g fill="#f6f6f6" stroke="#3c3c3c" stroke-width="2.200"><path d="M20 17v-6h15v6" /><path d="M8 17h40v29H8z"/><circle cx="23" cy="30" r="10"/><circle cx="23" cy="30" r="5" fill="#333"/><circle cx="41" cy="27" r="3"/></g></svg>
    <svg class="w-[56px] h-[56px]" viewBox="0 0 56 56"><g fill="#f6f6f6" stroke="#3c3c3c" stroke-width="2.400"><rect x="12" y="11" width="33" height="37" rx="2"/><path d="M18 14c3-3 5-7 10-7s7 4 10 7z"/><path d="M18 23h21M18 31h21M18 39h21"/></g></svg>
    <div class="w-[56px] h-[113px] bg-[#ff2d87] flex flex-wrap content-start"><span class="w-[27px] h-[28px] bg-[#0c9bf0]"></span><span class="w-[29px] h-[28px] bg-[#fde400]"></span><span class="w-[27px] h-[28px]"></span><span class="w-[29px] h-[28px] bg-[#04020c]"></span></div>
  </div>
</div>
<div class="absolute left-[3335px] top-[1017px] w-[169px] h-[56px] flex">
  <div class="w-[56px] h-[56px] bg-[#29abe2]"><svg class="w-[56px] h-[56px]" viewBox="0 0 56 56"><path d="M7 20l8-8h11l18 18-13 14L11 27z" fill="#fff" stroke="#fff" stroke-width="2.500" stroke-linejoin="round"/><path d="M6 12h10L6 23z" fill="#1461a6"/><path d="M15 22l7-4M14 23l18 17M22 18l18 16M12 19l5-5h7" fill="none" stroke="#29abe2" stroke-width="2.600"/><path d="M43 30l5 5-15 14-5-5z" fill="#29abe2" stroke="#fff" stroke-width="2.600"/></svg></div>
  <div class="w-[57px] h-[56px] bg-[#3b393a]"><svg class="w-[56px] h-[56px]" viewBox="0 0 56 56"><path d="M6 14l6-6 8 5-8 8z" fill="#0a0a0a"/><path d="M12 21l9-9 10 3 19 19-14 15-19-18z" fill="#ececec"/><path d="M17 31l14-15" stroke="#3b393a" stroke-width="2"/></svg></div>
  <div class="w-[56px] h-[56px] bg-[#5a5857] flex items-center justify-center font-['Liberation_Sans',sans-serif] text-[48px] leading-none text-[#e2e2e2]">A</div>
</div>
<svg class="absolute left-[3422px] top-[1048px] w-[38px] h-[48px]" viewBox="0 0 38 48"><path d="M11 4c0-3 5-3 5 0v12c2-2 5-1 5 2 2-2 5-1 6 2 2-2 5-1 6 1 2-1 4 0 4 3v6c0 9-5 16-14 16C12 46 7 37 2 27c-1-3 3-4 5-2l4 4z" fill="#fff" stroke="#111" stroke-width="2"/><path d="M21 18v7M27 20v6M33 21v6" stroke="#111" stroke-width="2"/></svg>

</div>
</body>
</html>
